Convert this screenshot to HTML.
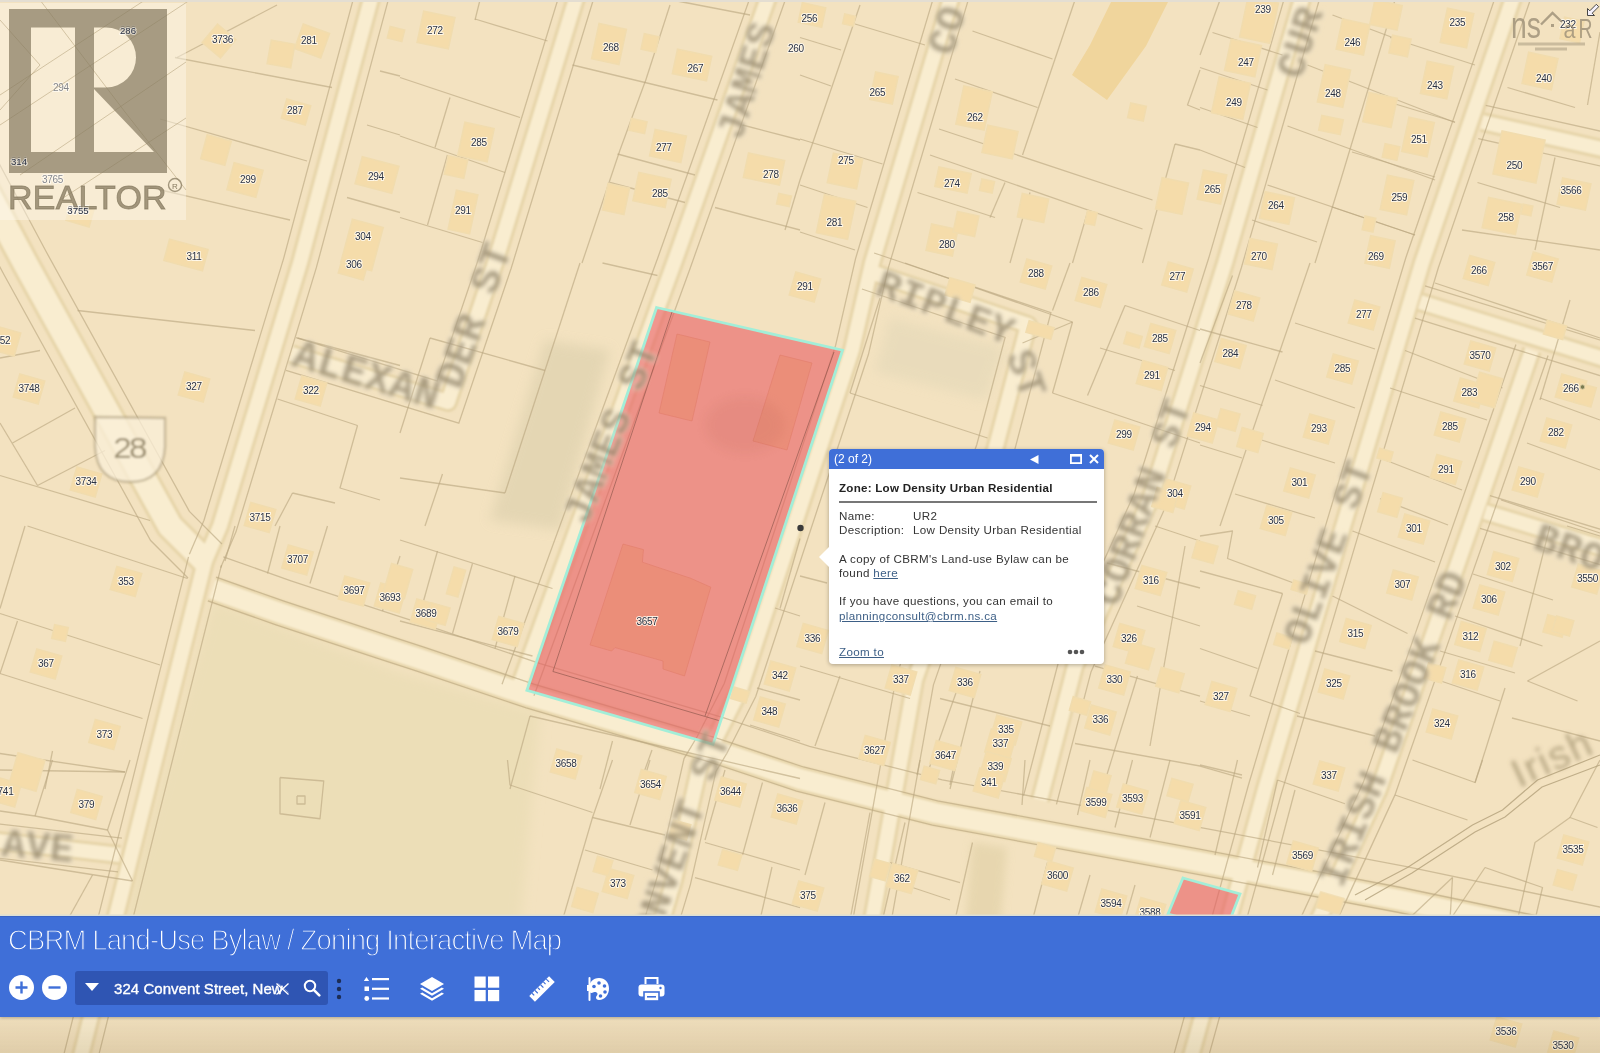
<!DOCTYPE html>
<html><head><meta charset="utf-8">
<style>
html,body{margin:0;padding:0;width:1600px;height:1053px;overflow:hidden;background:#f3e2c0;font-family:"Liberation Sans",sans-serif;}
#map{position:absolute;left:0;top:0;width:1600px;height:1053px;}
#toolbar{position:absolute;left:0;top:916px;width:1600px;height:101px;background:#3f6fd8;box-shadow:0 -1.5px 0 #dde0d6,inset 0 1px 0 #3a64c4,0 1px 3px rgba(0,0,0,.25);}
#toolbar .title{position:absolute;left:8px;top:7px;font-size:29.5px;color:#fff;letter-spacing:-0.9px;white-space:nowrap;font-weight:normal;-webkit-text-stroke:1.3px #3f6fd8;transform:scaleX(0.93);transform-origin:0 0;}
.zbtn{position:absolute;top:59px;width:25px;height:25px;}
#search{position:absolute;left:75px;top:55px;width:253px;height:34px;background:#2f55b3;border-radius:3px;}
#search .stext{position:absolute;left:39px;top:9px;font-size:15px;color:#fff;white-space:nowrap;-webkit-text-stroke:0.35px #fff;letter-spacing:0.05px;}
#search .sx{position:absolute;left:199px;top:9px;font-size:15px;color:#fff;}
.ic{position:absolute;top:60px;}
#popup{position:absolute;left:829px;top:449px;width:275px;height:215px;background:#fff;border-radius:4px;box-shadow:0 1px 4px rgba(0,0,0,.3);font-family:"Liberation Sans",sans-serif;}
#popup .ph{position:absolute;left:0;top:0;width:275px;height:20px;background:#3f6fd8;border-radius:4px 4px 0 0;}
#popup .pt{position:absolute;left:5px;top:3px;color:#fff;font-size:12px;}
#popup .pb{position:absolute;left:0;top:20px;width:275px;height:195px;}
#popup .zone{position:absolute;left:10px;top:12px;font-size:11.6px;letter-spacing:0.25px;font-weight:bold;color:#222;white-space:nowrap;}
#popup .hr{position:absolute;left:10px;top:32px;width:258px;height:2px;background:#777;}
#popup .row{position:absolute;left:10px;font-size:11.6px;letter-spacing:0.35px;color:#333;white-space:nowrap;line-height:14px;}
#popup .lab{display:inline-block;width:74px;}
#popup .lk{color:#3d5f86;}

</style></head><body>
<svg id="map" width="1600" height="1053" viewBox="0 0 1600 1053">
<defs>
<filter id="b05" x="-20%" y="-20%" width="140%" height="140%"><feGaussianBlur stdDeviation="0.6"/></filter>
<filter id="b1" x="-5%" y="-5%" width="110%" height="110%"><feGaussianBlur stdDeviation="1.2"/></filter>
<filter id="b15" x="-20%" y="-20%" width="140%" height="140%"><feGaussianBlur stdDeviation="1.3"/></filter>
<filter id="b2" x="-20%" y="-20%" width="140%" height="140%"><feGaussianBlur stdDeviation="2"/></filter>
<filter id="b4" x="-20%" y="-20%" width="140%" height="140%"><feGaussianBlur stdDeviation="4"/></filter>
<filter id="b6" x="-20%" y="-20%" width="140%" height="140%"><feGaussianBlur stdDeviation="6"/></filter>
</defs>
<rect x="0" y="0" width="1600" height="1053" fill="#f3e2c0"/>
<path d="M212,600 L400,672 L540,712 L520,930 L120,930 Z" fill="#ecdeb7" filter="url(#b6)"/>
<path d="M545,340 L610,350 L560,530 L490,520 Z" fill="#ddd0ad" opacity="0.65" filter="url(#b6)"/>
<path d="M890,318 L1005,348 L985,400 L875,372 Z" fill="#e3d8b8" opacity="0.6" filter="url(#b6)"/>
<path d="M972,842 L1007,848 L1000,930 L965,930 Z" fill="#e2d2a8" opacity="0.7" filter="url(#b4)"/>
<g filter="url(#b1)"><polyline points="372,-5 300,263 220,526 205,561" fill="none" stroke="#e6d4a8" stroke-width="20" stroke-linejoin="round"/><polyline points="-30,160 25,263 170,526 205,561" fill="none" stroke="#e6d4a8" stroke-width="30" stroke-linejoin="round"/><polyline points="205,561 155,760 80,1060" fill="none" stroke="#e6d4a8" stroke-width="20" stroke-linejoin="round"/><polyline points="212,589 280,613 380,646 420,659 530,696 713,750 800,779 935,813 1200,862 1400,900 1620,946" fill="none" stroke="#e6d4a8" stroke-width="26" stroke-linejoin="round"/><polyline points="577,-5 495,263 448,402 291,354" fill="none" stroke="#e6d4a8" stroke-width="20" stroke-linejoin="round"/><polyline points="769,-5 674,263 518,690" fill="none" stroke="#e6d4a8" stroke-width="20" stroke-linejoin="round"/><polyline points="952,-5 872,263 852,350 740,690 712,745 700,765 674,880 650,960" fill="none" stroke="#e6d4a8" stroke-width="20" stroke-linejoin="round"/><polyline points="868,271 1028,325 995,450 915,680 865,960" fill="none" stroke="#e6d4a8" stroke-width="20" stroke-linejoin="round"/><polyline points="1303,-5 1225,263 1150,500 1075,666 1040,800" fill="none" stroke="#e6d4a8" stroke-width="20" stroke-linejoin="round"/><polyline points="1514,-5 1422,263 1342,530 1265,789 1190,1060" fill="none" stroke="#e6d4a8" stroke-width="20" stroke-linejoin="round"/><polyline points="1482,122 1620,153" fill="none" stroke="#e6d4a8" stroke-width="20" stroke-linejoin="round"/><polyline points="1420,302 1620,364" fill="none" stroke="#e6d4a8" stroke-width="20" stroke-linejoin="round"/><polyline points="1532,350 1494,460 1445,600 1379,789 1300,960" fill="none" stroke="#e6d4a8" stroke-width="20" stroke-linejoin="round"/><polyline points="1485,512 1620,553" fill="none" stroke="#e6d4a8" stroke-width="20" stroke-linejoin="round"/><polyline points="-10,840 120,855" fill="none" stroke="#e6d4a8" stroke-width="20" stroke-linejoin="round"/><polyline points="372,-5 300,263 220,526 205,561" fill="none" stroke="#f9edd0" stroke-width="14" stroke-linejoin="round"/><polyline points="-30,160 25,263 170,526 205,561" fill="none" stroke="#f9edd0" stroke-width="24" stroke-linejoin="round"/><polyline points="205,561 155,760 80,1060" fill="none" stroke="#f9edd0" stroke-width="14" stroke-linejoin="round"/><polyline points="212,589 280,613 380,646 420,659 530,696 713,750 800,779 935,813 1200,862 1400,900 1620,946" fill="none" stroke="#f9edd0" stroke-width="20" stroke-linejoin="round"/><polyline points="577,-5 495,263 448,402 291,354" fill="none" stroke="#f9edd0" stroke-width="14" stroke-linejoin="round"/><polyline points="769,-5 674,263 518,690" fill="none" stroke="#f9edd0" stroke-width="14" stroke-linejoin="round"/><polyline points="952,-5 872,263 852,350 740,690 712,745 700,765 674,880 650,960" fill="none" stroke="#f9edd0" stroke-width="14" stroke-linejoin="round"/><polyline points="868,271 1028,325 995,450 915,680 865,960" fill="none" stroke="#f9edd0" stroke-width="14" stroke-linejoin="round"/><polyline points="1303,-5 1225,263 1150,500 1075,666 1040,800" fill="none" stroke="#f9edd0" stroke-width="14" stroke-linejoin="round"/><polyline points="1514,-5 1422,263 1342,530 1265,789 1190,1060" fill="none" stroke="#f9edd0" stroke-width="14" stroke-linejoin="round"/><polyline points="1482,122 1620,153" fill="none" stroke="#f9edd0" stroke-width="14" stroke-linejoin="round"/><polyline points="1420,302 1620,364" fill="none" stroke="#f9edd0" stroke-width="14" stroke-linejoin="round"/><polyline points="1532,350 1494,460 1445,600 1379,789 1300,960" fill="none" stroke="#f9edd0" stroke-width="14" stroke-linejoin="round"/><polyline points="1485,512 1620,553" fill="none" stroke="#f9edd0" stroke-width="14" stroke-linejoin="round"/><polyline points="-10,840 120,855" fill="none" stroke="#f9edd0" stroke-width="14" stroke-linejoin="round"/></g>
<g fill="none" stroke="#b9a680" stroke-width="1.3" stroke-opacity="0.62" filter="url(#b05)"><polyline points="388.4178314679533,-0.5892393071170172 316.3454220439997,267.6802846598215 235.99281610086464,531.839476697878 220.62546551030698,567.6966280758459"/><polyline points="355.5821685320467,-9.410760692882983 283.6545779560003,258.3197153401785 204.00718389913536,520.160523302122 189.37453448969302,554.3033719241541"/><polyline points="-8.829221830070217,148.69521554032875 46.09501656171117,251.55333471039208 189.37536123444758,511.4342357374933 221.97056274847714,544.0294372515228"/><polyline points="-51.17077816992978,171.30478445967125 3.9049834382888307,274.44666528960795 150.62463876555242,540.5657642625067 188.02943725152286,577.9705627484772"/><polyline points="221.487537336951,565.142597320842 171.48998567966603,764.1328529168361 96.49242250247065,1064.1231056256177"/><polyline points="188.512462663049,556.857402679158 138.51001432033397,755.8671470831639 63.507577497529354,1055.8768943743823"/><polyline points="223.31588400299466,556.9383286581817 290.9865180324265,580.8220818450401 390.5819338956886,613.6885690799165 430.67453960281307,626.718665934732 540.2346980641735,663.5707192353714 723.1902559709739,717.557605175083 809.5411253402864,746.3412282981872 942.2502252609864,779.7642608708079 1206.2642684373573,828.5819518732312 1406.6530947927045,866.6558288807472 1626.9586063882375,912.719708577995"/><polyline points="216.1602514716892,577.2126208302138 284.0391610413333,601.1698830312647 383.89041687341495,634.1207974558516 423.9244630892695,647.1318624760044 533.7627566412402,684.0774703071219 716.7464176363875,738.0726489614276 803.507766669223,766.9930986390394 937.6655239930097,800.7809782613265 1202.3030398666754,849.7139528945703 1402.445990732612,887.7411135590983 1622.5583111721462,933.7645987419099"/><polyline points="207.8397485283108,600.7873791697862 275.9608389586667,624.8301169687353 376.10958312658505,657.8792025441484 416.0755369107305,670.8681375239956 526.2372433587598,707.9225296928781 709.2535823636125,761.9273510385724 796.492233330777,791.0069013609606 932.3344760069903,825.2190217386735 1197.6969601333246,874.2860471054297 1397.554009267388,912.2588864409017 1617.4416888278538,958.2354012580901"/><polyline points="593.256092045568,-0.026121090535149882 511.18362765879255,268.21071373453594 458.81649511703125,423.0837227410216 286.02965421931884,370.25717265764456"/><polyline points="560.743907954432,-9.973878909464851 478.81637234120745,257.78928626546406 437.18350488296875,380.9162772589784 295.97034578068116,337.74282734235544"/><polyline points="785.0230943175657,0.6798282095848354 689.9957847023568,268.7568700714372 533.9677355052602,695.833645758362"/><polyline points="752.9769056824343,-10.679828209584835 658.0042152976432,257.2431299285628 502.0322644947399,684.166354241638"/><polyline points="968.2897232278215,-0.13739605139657574 888.4456905201988,267.3401135191394 868.3920381416209,354.57350136595306 755.7396879946074,696.55385002653 726.8815527756948,753.2394727779654 715.9802179965899,771.4083640764736 690.4519074099998,884.3220455171604 666.2830468487596,964.8849140546279"/><polyline points="935.7102767721785,-9.862603948603425 855.5543094798012,258.6598864808606 835.6079618583791,345.42649863404694 724.2603120053926,683.44614997347 697.1184472243052,736.7605272220346 684.0197820034101,758.5916359235264 657.5480925900002,875.6779544828396 633.7169531512404,955.1150859453721"/><polyline points="874.0757942390054,252.9976466992432 1050.9041733790095,312.6772246589946 1013.1847009501212,455.55401416235986 933.4396648702143,684.8209928920921 883.7041239346612,963.3400221311895"/><polyline points="861.9242057609946,289.0023533007568 1005.0958266209905,337.3227753410054 976.8152990498788,444.44598583764014 896.5603351297857,675.1790071079079 846.2958760653388,956.6599778688105"/><polyline points="1319.3227258937582,-0.24935589659278268 1241.2674646557382,267.94051604942456 1165.9051673726062,506.08537546412117 1091.0845786009422,671.6882786120709 1056.4481893566099,804.2961688618011"/><polyline points="1286.6772741062418,-9.750644103407218 1208.7325353442618,258.05948395057544 1134.0948326273938,493.91462453587883 1058.9154213990578,660.3117213879291 1023.5518106433902,795.7038311381989"/><polyline points="1530.0789763192156,0.5196485871933927 1438.1881850476282,268.2015188131219 1358.2899399153032,534.8619119422564 1281.341094650587,793.6898460144839 1206.3841278486093,1064.5343527256298"/><polyline points="1497.9210236807844,-10.519648587193393 1405.8118149523718,257.7984811868781 1325.7100600846968,525.1380880577436 1248.658905349413,784.3101539855161 1173.6158721513907,1055.4656472743702"/><polyline points="1485.7259870175815,105.41334811528216 1623.7259870175815,136.41334811528216"/><polyline points="1478.2740129824185,138.58665188471784 1616.2740129824185,169.58665188471784"/><polyline points="1425.0336791089394,285.7623254550343 1625.0336791089394,347.7623254550343"/><polyline points="1414.9663208910606,318.2376745449657 1614.9663208910606,380.2376745449657"/><polyline points="1548.0682334929566,355.5508442975668 1510.0569787859858,465.5834237124817 1461.0475778985754,605.6102833907979 1394.778053912866,795.3821020771474 1315.432667026275,967.1297116671096"/><polyline points="1515.9317665070434,344.4491557024332 1477.9430212140142,454.4165762875183 1428.9524221014246,594.3897166092021 1363.221946087134,782.6178979228526 1284.567332973725,952.8702883328904"/><polyline points="1489.9401573077037,495.73362837707367 1624.9401573077037,536.7336283770736"/><polyline points="1480.0598426922963,528.2663716229264 1615.0598426922963,569.2663716229264"/><polyline points="-8.051390164252782,823.1120480901908 121.94860983574722,838.1120480901908"/><polyline points="-11.948609835747218,856.8879519098092 118.05139016425278,871.8879519098092"/></g>
<g fill="none" stroke="#b9a680" stroke-width="1.3" stroke-opacity="0.62" stroke-linejoin="round" filter="url(#b05)"><polyline points="175,57.5 332,87.5"/><polyline points="160,119 307,161"/><polyline points="150,187.5 290,220"/><polyline points="347,197.5 400,212.5"/><polyline points="380,71 400,76"/><polyline points="367,125 400,135"/><polyline points="177,57.5 277,5"/><polyline points="475,19 547.5,41"/><polyline points="400,77.5 520,117.5"/><polyline points="400,136 505,172.5"/><polyline points="400,217.5 482.5,242.5"/><polyline points="450,97.5 435,147.5"/><polyline points="447.5,155 427.5,225"/><polyline points="480,0 475,20"/><polyline points="572.5,65 717.5,100"/><polyline points="645,82.5 670,5"/><polyline points="617.5,154 695,175"/><polyline points="610,182.5 685,202.5"/><polyline points="672,0 750,15"/><polyline points="742.5,125 800,140"/><polyline points="715,207.5 800,230"/><polyline points="800,180 785,230"/><polyline points="645,82 620,150 582,263"/><polyline points="855,24 925,45"/><polyline points="800,37.5 841,50"/><polyline points="800,75 831,86"/><polyline points="860,5 800,180"/><polyline points="800,139 882.5,164"/><polyline points="800,185 867.5,207.5"/><polyline points="800,232 855,250"/><polyline points="972.5,31 1052.5,59"/><polyline points="955,79 1037.5,107.5"/><polyline points="939,129 1152.5,200"/><polyline points="930,155 1142.5,229"/><polyline points="917.5,192.5 995,217.5"/><polyline points="1075,0 1022.5,155"/><polyline points="1005,182.5 990,217.5"/><polyline points="1175,144 1200,150"/><polyline points="1175,144 1142.5,263"/><polyline points="1030,192.5 1010,263"/><polyline points="1087.5,212.5 1072.5,263"/><polyline points="1200,70 1187.5,105 1200,110"/><polyline points="1212.5,32.5 1282.5,55"/><polyline points="1200,67.5 1267.5,90"/><polyline points="1200,107.5 1257.5,127.5"/><polyline points="1200,150 1245,167.5"/><polyline points="1220,0 1200,55"/><polyline points="1332.5,15 1392.5,37.5"/><polyline points="1307.5,65 1455,122.5"/><polyline points="1287.5,126 1435,180"/><polyline points="1267.5,185 1415,235"/><polyline points="1252,220 1317,242"/><polyline points="1395,0 1340,182.5 1315,263"/><polyline points="1390,37.5 1475,65"/><polyline points="1372,97 1455,122"/><polyline points="1352,152 1435,177"/><polyline points="1332,207 1415,235"/><polyline points="1507.5,87.5 1575,107.5"/><polyline points="1587.5,105 1600,32"/><polyline points="1477.5,182.5 1560,207.5"/><polyline points="1555,157.5 1535,250"/><polyline points="1462,230 1600,250"/><polyline points="77.5,310.5 255,330.5"/><polyline points="0,358 40,350.5"/><polyline points="12.5,443 75,408"/><polyline points="37.5,485.5 105,450.5"/><polyline points="0,475.5 150,520.5"/><polyline points="0,423 37.5,485.5"/><polyline points="277.5,399 357.5,425.5"/><polyline points="297.5,338 400,365.5"/><polyline points="357.5,425.5 340,488 380,500"/><polyline points="292.5,493 275,526"/><polyline points="292.5,493 335,503"/><polyline points="580,263 505,493"/><polyline points="602.5,263 657.5,275.5"/><polyline points="430,338 545,370.5"/><polyline points="430,338 400,433"/><polyline points="400,478 505,493"/><polyline points="442.5,474 425,526"/><polyline points="905,263 1072.5,322"/><polyline points="1022.5,343 1072.5,322"/><polyline points="1072.5,322 1052.5,393"/><polyline points="1052.5,393 1200,443"/><polyline points="850,393 987.5,438"/><polyline points="880,298 850,393"/><polyline points="1125,305.5 1200,330.5"/><polyline points="1070,263 1052.5,310.5"/><polyline points="1125,305.5 1087.5,395.5"/><polyline points="1100,348 1175,370.5"/><polyline points="1200,329 1282.5,352"/><polyline points="1295,323 1375,349"/><polyline points="1200,385.5 1262.5,405.5"/><polyline points="1275,380 1355,408"/><polyline points="1200,445 1242,458"/><polyline points="1255,438 1335,463"/><polyline points="1235,494 1315,518"/><polyline points="1310,263 1220,526"/><polyline points="1232.5,275.5 1200,363"/><polyline points="1435,283 1600,338"/><polyline points="1405,350.5 1502.5,388"/><polyline points="1390,388 1487,420"/><polyline points="1380,458 1462,490"/><polyline points="1540,398 1600,420"/><polyline points="1527,443 1600,470"/><polyline points="1570,300 1540,400"/><polyline points="25,526 0,608.5"/><polyline points="27.5,526 187.5,578.5"/><polyline points="0,613.5 160,665"/><polyline points="17.5,621 0,673.5"/><polyline points="0,673.5 142.5,718.5"/><polyline points="0,753.5 125,772"/><polyline points="52.5,751 45,789"/><polyline points="235,526 225,561"/><polyline points="280,526 267.5,573.5"/><polyline points="327.5,526 310,583.5"/><polyline points="400,556 382.5,611"/><polyline points="400,540 552.5,588.5"/><polyline points="437.5,551 420,613.5"/><polyline points="472.5,563.5 452.5,633.5"/><polyline points="515,576 495,648.5"/><polyline points="400,621 532.5,656"/><polyline points="530,716 510,789"/><polyline points="530,716 800,778.5"/><polyline points="612.5,741 600,789"/><polyline points="652,750 638,789"/><polyline points="800,538.5 780,608.5"/><polyline points="757,688 800,700"/><polyline points="750,725 800,741"/><polyline points="775,608 800,616"/><polyline points="800,576 827,583"/><polyline points="800,666 910,698.5"/><polyline points="840,676 815,746"/><polyline points="940,698.5 1050,726"/><polyline points="980,671 950,789"/><polyline points="962,676 925,780"/><polyline points="1155,526 1200,541"/><polyline points="1107,563 1200,588"/><polyline points="1075,743.5 1200,766"/><polyline points="1095,666 1200,696"/><polyline points="1137,606 1200,626"/><polyline points="1137.5,676 1102.5,789"/><polyline points="1185,546 1150,746"/><polyline points="1200,536 1232.5,531 1227.5,558.5 1295,583.5"/><polyline points="1200,571 1282.5,593.5"/><polyline points="1282.5,593.5 1250,696 1300,713.5"/><polyline points="1200,648.5 1257.5,668.5"/><polyline points="1200,701 1250,716"/><polyline points="1200,766 1242,778"/><polyline points="1352.5,531 1435,562"/><polyline points="1332.5,596 1407.5,633.5"/><polyline points="1315,651 1392.5,671"/><polyline points="1297,716 1375,736"/><polyline points="1455,616 1542.5,646"/><polyline points="1380,498.6 1448,525"/><polyline points="1501,500 1600,533"/><polyline points="1473,574 1553,600"/><polyline points="1440,651 1515,673"/><polyline points="1432,678 1500,701"/><polyline points="1550,526 1520,646"/><polyline points="1567,526 1600,536"/><polyline points="1527.5,681 1600,641"/><polyline points="1527.5,681 1577.5,701"/><polyline points="1505,688 1475,783"/><polyline points="1512,718 1600,741"/><polyline points="0,770 125,772"/><polyline points="52.5,760 35,816"/><polyline points="35,816 107.5,830"/><polyline points="0,811 35,816"/><polyline points="130,760 107.5,830 132.5,881"/><polyline points="0,860 132.5,881"/><polyline points="92.5,875 67.5,920"/><polyline points="280,777.5 323.75,781 320,818.75 280,813.75 280,777.5"/><polyline points="297,796 305,796 305,804 297,804 297,796"/><polyline points="507.5,760 510,785 592.5,812.5"/><polyline points="612.5,760 592.5,817.5 562.5,920"/><polyline points="592.5,817.5 665,835"/><polyline points="585,850 652.5,870"/><polyline points="650,760 630,825"/><polyline points="725,770 705,840"/><polyline points="762.5,782.5 742.5,855"/><polyline points="705,842.5 800,870"/><polyline points="695,877.5 800,907.5"/><polyline points="772,867 760,920"/><polyline points="825,802.5 805,875"/><polyline points="870,812.5 850,920"/><polyline points="905,822.5 882.5,920"/><polyline points="972.5,842.5 955,920"/><polyline points="890,862.5 960,882.5"/><polyline points="890,880 950,900"/><polyline points="1047.5,862.5 1032.5,920"/><polyline points="1090,875 1077,920"/><polyline points="1135,885 1125,920"/><polyline points="920,760 917,775"/><polyline points="955,760 950,785"/><polyline points="1025,760 1022,805"/><polyline points="1077.5,815 1090,760"/><polyline points="1115,827.5 1132.5,760"/><polyline points="1150,837.5 1170,760"/><polyline points="1200,765 1242,775"/><polyline points="1237.5,760 1215,855"/><polyline points="1277.5,780 1257.5,867.5"/><polyline points="1295,790 1272.5,875"/><polyline points="1277.5,780 1345,803.75"/><polyline points="1395,795 1467.5,820"/><polyline points="1475,782.5 1482.5,760"/><polyline points="1412.5,760 1475,782.5"/><polyline points="1600,760 1570,817.5 1597.5,827.5"/><polyline points="1570,817.5 1535,842.5 1517.5,920"/><polyline points="1485,867.5 1542.5,887.5 1535,920"/><polyline points="1485,867.5 1450,920"/><polyline points="1452.5,877.5 1407.5,920"/><polyline points="1452.5,877.5 1450,920"/></g>
<g fill="none" stroke="#b3a07a" stroke-width="1.2" stroke-opacity="0.8" filter="url(#b05)"><polyline points="1355,895 1407.5,867.5 1472.5,825 1502.5,810 1537.5,780 1600,755"/><polyline points="1365,900 1412,873 1475,832 1505,817 1542,787 1600,765"/></g>
<g fill="#f5dcaa" stroke="#f1dcae" stroke-width="1.5" filter="url(#b05)"><rect x="-8.0" y="329.0" width="26" height="24" transform="rotate(16 5.0 341.0)"/><rect x="16.0" y="377.0" width="26" height="24" transform="rotate(16 29.0 389.0)"/><rect x="181.0" y="375.0" width="26" height="24" transform="rotate(16 194.0 387.0)"/><rect x="298.0" y="379.0" width="26" height="24" transform="rotate(16 311.0 391.0)"/><rect x="73.0" y="470.0" width="26" height="24" transform="rotate(16 86.0 482.0)"/><rect x="247.0" y="505.5" width="26" height="24" transform="rotate(16 260.0 517.5)"/><rect x="341.0" y="253.0" width="26" height="24" transform="rotate(16 354.0 265.0)"/><rect x="792.0" y="275.0" width="26" height="24" transform="rotate(16 805.0 287.0)"/><rect x="1023.0" y="262.0" width="26" height="24" transform="rotate(16 1036.0 274.0)"/><rect x="1078.0" y="280.5" width="26" height="24" transform="rotate(16 1091.0 292.5)"/><rect x="1164.5" y="265.0" width="26" height="24" transform="rotate(16 1177.5 277.0)"/><rect x="1147.0" y="326.5" width="26" height="24" transform="rotate(16 1160.0 338.5)"/><rect x="1139.0" y="363.5" width="26" height="24" transform="rotate(16 1152.0 375.5)"/><rect x="1111.0" y="423.0" width="26" height="24" transform="rotate(16 1124.0 435.0)"/><rect x="1162.0" y="482.0" width="26" height="24" transform="rotate(16 1175.0 494.0)"/><rect x="1466.0" y="258.5" width="26" height="24" transform="rotate(16 1479.0 270.5)"/><rect x="1529.5" y="255.0" width="26" height="24" transform="rotate(16 1542.5 267.0)"/><rect x="1231.0" y="294.0" width="26" height="24" transform="rotate(16 1244.0 306.0)"/><rect x="1351.0" y="303.0" width="26" height="24" transform="rotate(16 1364.0 315.0)"/><rect x="1217.5" y="341.5" width="26" height="24" transform="rotate(16 1230.5 353.5)"/><rect x="1329.5" y="357.0" width="26" height="24" transform="rotate(16 1342.5 369.0)"/><rect x="1467.0" y="344.0" width="26" height="24" transform="rotate(16 1480.0 356.0)"/><rect x="1456.5" y="381.0" width="26" height="24" transform="rotate(16 1469.5 393.0)"/><rect x="1558.0" y="377.0" width="26" height="24" transform="rotate(16 1571.0 389.0)"/><rect x="1190.0" y="416.0" width="26" height="24" transform="rotate(16 1203.0 428.0)"/><rect x="1306.0" y="417.0" width="26" height="24" transform="rotate(16 1319.0 429.0)"/><rect x="1437.0" y="415.0" width="26" height="24" transform="rotate(16 1450.0 427.0)"/><rect x="1543.0" y="421.0" width="26" height="24" transform="rotate(16 1556.0 433.0)"/><rect x="1286.5" y="471.0" width="26" height="24" transform="rotate(16 1299.5 483.0)"/><rect x="1433.0" y="457.5" width="26" height="24" transform="rotate(16 1446.0 469.5)"/><rect x="1515.0" y="470.0" width="26" height="24" transform="rotate(16 1528.0 482.0)"/><rect x="1263.0" y="508.5" width="26" height="24" transform="rotate(16 1276.0 520.5)"/><rect x="284.5" y="548.0" width="26" height="24" transform="rotate(16 297.5 560.0)"/><rect x="113.0" y="569.5" width="26" height="24" transform="rotate(16 126.0 581.5)"/><rect x="341.0" y="579.0" width="26" height="24" transform="rotate(16 354.0 591.0)"/><rect x="377.0" y="586.0" width="26" height="24" transform="rotate(16 390.0 598.0)"/><rect x="33.0" y="652.0" width="26" height="24" transform="rotate(16 46.0 664.0)"/><rect x="91.5" y="722.5" width="26" height="24" transform="rotate(16 104.5 734.5)"/><rect x="413.0" y="602.0" width="26" height="24" transform="rotate(16 426.0 614.0)"/><rect x="495.0" y="619.5" width="26" height="24" transform="rotate(16 508.0 631.5)"/><rect x="767.0" y="664.0" width="26" height="24" transform="rotate(16 780.0 676.0)"/><rect x="756.5" y="700.0" width="26" height="24" transform="rotate(16 769.5 712.0)"/><rect x="553.0" y="752.0" width="26" height="24" transform="rotate(16 566.0 764.0)"/><rect x="637.5" y="772.5" width="26" height="24" transform="rotate(16 650.5 784.5)"/><rect x="799.5" y="626.5" width="26" height="24" transform="rotate(16 812.5 638.5)"/><rect x="1138.0" y="568.5" width="26" height="24" transform="rotate(16 1151.0 580.5)"/><rect x="1116.0" y="626.5" width="26" height="24" transform="rotate(16 1129.0 638.5)"/><rect x="888.0" y="668.0" width="26" height="24" transform="rotate(16 901.0 680.0)"/><rect x="952.0" y="670.5" width="26" height="24" transform="rotate(16 965.0 682.5)"/><rect x="1101.5" y="668.0" width="26" height="24" transform="rotate(16 1114.5 680.0)"/><rect x="1087.5" y="708.0" width="26" height="24" transform="rotate(16 1100.5 720.0)"/><rect x="993.0" y="718.0" width="26" height="24" transform="rotate(16 1006.0 730.0)"/><rect x="987.5" y="732.0" width="26" height="24" transform="rotate(16 1000.5 744.0)"/><rect x="861.5" y="738.5" width="26" height="24" transform="rotate(16 874.5 750.5)"/><rect x="932.5" y="743.5" width="26" height="24" transform="rotate(16 945.5 755.5)"/><rect x="982.5" y="754.5" width="26" height="24" transform="rotate(16 995.5 766.5)"/><rect x="976.0" y="771.0" width="26" height="24" transform="rotate(16 989.0 783.0)"/><rect x="1401.0" y="517.0" width="26" height="24" transform="rotate(16 1414.0 529.0)"/><rect x="1490.0" y="554.5" width="26" height="24" transform="rotate(16 1503.0 566.5)"/><rect x="1574.5" y="567.0" width="26" height="24" transform="rotate(16 1587.5 579.0)"/><rect x="1389.5" y="573.0" width="26" height="24" transform="rotate(16 1402.5 585.0)"/><rect x="1476.0" y="588.0" width="26" height="24" transform="rotate(16 1489.0 600.0)"/><rect x="1342.5" y="621.5" width="26" height="24" transform="rotate(16 1355.5 633.5)"/><rect x="1457.5" y="624.5" width="26" height="24" transform="rotate(16 1470.5 636.5)"/><rect x="1455.0" y="663.0" width="26" height="24" transform="rotate(16 1468.0 675.0)"/><rect x="1208.0" y="684.5" width="26" height="24" transform="rotate(16 1221.0 696.5)"/><rect x="1321.0" y="672.0" width="26" height="24" transform="rotate(16 1334.0 684.0)"/><rect x="1429.0" y="712.0" width="26" height="24" transform="rotate(16 1442.0 724.0)"/><rect x="1316.0" y="764.0" width="26" height="24" transform="rotate(16 1329.0 776.0)"/><rect x="-7.5" y="780.0" width="26" height="24" transform="rotate(16 5.5 792.0)"/><rect x="73.5" y="792.5" width="26" height="24" transform="rotate(16 86.5 804.5)"/><rect x="717.5" y="780.0" width="26" height="24" transform="rotate(16 730.5 792.0)"/><rect x="774.0" y="797.0" width="26" height="24" transform="rotate(16 787.0 809.0)"/><rect x="605.0" y="871.5" width="26" height="24" transform="rotate(16 618.0 883.5)"/><rect x="1083.0" y="790.5" width="26" height="24" transform="rotate(16 1096.0 802.5)"/><rect x="1119.5" y="787.0" width="26" height="24" transform="rotate(16 1132.5 799.0)"/><rect x="1177.0" y="803.5" width="26" height="24" transform="rotate(16 1190.0 815.5)"/><rect x="889.0" y="866.5" width="26" height="24" transform="rotate(16 902.0 878.5)"/><rect x="795.0" y="884.0" width="26" height="24" transform="rotate(16 808.0 896.0)"/><rect x="1044.5" y="864.0" width="26" height="24" transform="rotate(16 1057.5 876.0)"/><rect x="1098.0" y="892.0" width="26" height="24" transform="rotate(16 1111.0 904.0)"/><rect x="1137.0" y="900.5" width="26" height="24" transform="rotate(16 1150.0 912.5)"/><rect x="1289.5" y="844.0" width="26" height="24" transform="rotate(16 1302.5 856.0)"/><rect x="1560.0" y="838.0" width="26" height="24" transform="rotate(16 1573.0 850.0)"/><rect x="1493.0" y="1020.0" width="26" height="24" transform="rotate(16 1506.0 1032.0)"/><rect x="1550.0" y="1034.0" width="26" height="24" transform="rotate(16 1563.0 1046.0)"/><rect x="207.0" y="29.0" width="24" height="24" transform="rotate(40 219 41)"/><rect x="298.0" y="28.0" width="28" height="26" transform="rotate(20 312 41)"/><rect x="269.0" y="42.0" width="24" height="24" transform="rotate(10 281 54)"/><rect x="283.5" y="102.0" width="25" height="20" transform="rotate(16 296 112)"/><rect x="203.5" y="137.5" width="25" height="25" transform="rotate(15 216 150)"/><rect x="230.0" y="166.0" width="30" height="28" transform="rotate(15 245 180)"/><rect x="358.0" y="161.0" width="38" height="28" transform="rotate(15 377 175)"/><rect x="346.0" y="222.5" width="32" height="45" transform="rotate(15 362 245)"/><rect x="166.0" y="244.0" width="40" height="22" transform="rotate(15 186 255)"/><rect x="68.0" y="206.0" width="24" height="18" transform="rotate(16 80 215)"/><rect x="420.0" y="14.0" width="32" height="32" transform="rotate(12 436 30)"/><rect x="388.5" y="28.0" width="15" height="12" transform="rotate(14 396 34)"/><rect x="595.0" y="26.0" width="28" height="36" transform="rotate(12 609 44)"/><rect x="642.5" y="35.0" width="15" height="16" transform="rotate(12 650 43)"/><rect x="674.5" y="52.5" width="35" height="25" transform="rotate(12 692 65)"/><rect x="461.0" y="125.0" width="30" height="34" transform="rotate(12 476 142)"/><rect x="446.0" y="157.5" width="20" height="19" transform="rotate(12 456 167)"/><rect x="452.0" y="192.0" width="22" height="40" transform="rotate(12 463 212)"/><rect x="630.0" y="120.0" width="16" height="12" transform="rotate(12 638 126)"/><rect x="652.0" y="132.5" width="32" height="27" transform="rotate(12 668 146)"/><rect x="635.5" y="175.5" width="33" height="29" transform="rotate(12 652 190)"/><rect x="605.0" y="185.5" width="22" height="27" transform="rotate(12 616 199)"/><rect x="745.5" y="156.5" width="37" height="25" transform="rotate(12 764 169)"/><rect x="777.5" y="194.5" width="13" height="11" transform="rotate(12 784 200)"/><rect x="800.0" y="5.0" width="24" height="20" transform="rotate(12 812 15)"/><rect x="843.5" y="15.0" width="11" height="10" transform="rotate(12 849 20)"/><rect x="872.5" y="74.0" width="23" height="28" transform="rotate(12 884 88)"/><rect x="959.5" y="88.5" width="29" height="39" transform="rotate(12 974 108)"/><rect x="984.5" y="128.0" width="31" height="28" transform="rotate(12 1000 142)"/><rect x="830.0" y="156.0" width="30" height="30" transform="rotate(12 845 171)"/><rect x="936.5" y="170.0" width="33" height="20" transform="rotate(12 953 180)"/><rect x="980.5" y="180.0" width="13" height="12" transform="rotate(12 987 186)"/><rect x="820.0" y="197.5" width="32" height="39" transform="rotate(12 836 217)"/><rect x="928.5" y="226.5" width="27" height="27" transform="rotate(12 942 240)"/><rect x="955.0" y="213.5" width="22" height="21" transform="rotate(12 966 224)"/><rect x="1019.5" y="196.0" width="27" height="24" transform="rotate(12 1033 208)"/><rect x="1086.0" y="211.5" width="10" height="13" transform="rotate(12 1091 218)"/><rect x="1129.0" y="104.5" width="16" height="15" transform="rotate(12 1137 112)"/><rect x="1158.5" y="180.0" width="27" height="32" transform="rotate(12 1172 196)"/><rect x="1243.5" y="-0.5" width="31" height="41" transform="rotate(12 1259 20)"/><rect x="1227.5" y="42.0" width="31" height="32" transform="rotate(12 1243 58)"/><rect x="1215.0" y="79.5" width="32" height="37" transform="rotate(12 1231 98)"/><rect x="1339.0" y="21.5" width="28" height="31" transform="rotate(12 1353 37)"/><rect x="1372.0" y="2.5" width="28" height="25" transform="rotate(12 1386 15)"/><rect x="1390.5" y="37.0" width="19" height="18" transform="rotate(12 1400 46)"/><rect x="1321.0" y="67.0" width="26" height="38" transform="rotate(12 1334 86)"/><rect x="1320.0" y="117.5" width="22" height="15" transform="rotate(12 1331 125)"/><rect x="1365.5" y="95.0" width="29" height="30" transform="rotate(12 1380 110)"/><rect x="1443.5" y="10.5" width="27" height="35" transform="rotate(12 1457 28)"/><rect x="1423.5" y="63.5" width="27" height="33" transform="rotate(12 1437 80)"/><rect x="1405.0" y="119.5" width="26" height="35" transform="rotate(12 1418 137)"/><rect x="1383.5" y="145.0" width="15" height="14" transform="rotate(12 1391 152)"/><rect x="1383.5" y="177.5" width="27" height="35" transform="rotate(12 1397 195)"/><rect x="1262.0" y="194.5" width="30" height="27" transform="rotate(12 1277 208)"/><rect x="1200.0" y="172.0" width="24" height="30" transform="rotate(12 1212 187)"/><rect x="1363.5" y="217.0" width="11" height="14" transform="rotate(12 1369 224)"/><rect x="1247.0" y="241.0" width="28" height="26" transform="rotate(12 1261 254)"/><rect x="1367.5" y="238.0" width="25" height="28" transform="rotate(12 1380 252)"/><rect x="1525.0" y="55.0" width="30" height="32" transform="rotate(12 1540 71)"/><rect x="1497.0" y="135.0" width="44" height="44" transform="rotate(12 1519 157)"/><rect x="1559.5" y="180.5" width="29" height="27" transform="rotate(12 1574 194)"/><rect x="1485.0" y="200.5" width="34" height="31" transform="rotate(12 1502 216)"/><rect x="1522.0" y="205.0" width="10" height="10" transform="rotate(12 1527 210)"/><rect x="1562.0" y="19.0" width="20" height="22" transform="rotate(12 1572 30)"/><rect x="947.0" y="281.0" width="26" height="18" transform="rotate(16 960 290)"/><rect x="1027.0" y="324.0" width="26" height="12" transform="rotate(16 1040 330)"/><rect x="1125.0" y="334.0" width="16" height="12" transform="rotate(16 1133 340)"/><rect x="1475.0" y="375.0" width="24" height="30" transform="rotate(16 1487 390)"/><rect x="1576.0" y="385.0" width="18" height="20" transform="rotate(16 1585 395)"/><rect x="1380.0" y="495.0" width="20" height="20" transform="rotate(16 1390 505)"/><rect x="1545.0" y="323.0" width="20" height="14" transform="rotate(16 1555 330)"/><rect x="1218.0" y="411.0" width="20" height="18" transform="rotate(16 1228 420)"/><rect x="1378.0" y="450.0" width="14" height="10" transform="rotate(16 1385 455)"/><rect x="1239.0" y="430.0" width="22" height="20" transform="rotate(16 1250 440)"/><rect x="1154.0" y="490.0" width="22" height="20" transform="rotate(16 1165 500)"/><rect x="1007.0" y="613.0" width="20" height="14" transform="rotate(16 1017 620)"/><rect x="1049.0" y="601.0" width="22" height="18" transform="rotate(16 1060 610)"/><rect x="1071.0" y="699.0" width="18" height="14" transform="rotate(16 1080 706)"/><rect x="1128.0" y="645.0" width="24" height="22" transform="rotate(16 1140 656)"/><rect x="1158.0" y="670.0" width="24" height="20" transform="rotate(16 1170 680)"/><rect x="1292.0" y="582.0" width="16" height="10" transform="rotate(16 1300 587)"/><rect x="1275.0" y="635.0" width="16" height="12" transform="rotate(16 1283 641)"/><rect x="1194.0" y="543.0" width="22" height="18" transform="rotate(16 1205 552)"/><rect x="1236.0" y="593.0" width="18" height="14" transform="rotate(16 1245 600)"/><rect x="1545.0" y="617.0" width="20" height="18" transform="rotate(16 1555 626)"/><rect x="1426.0" y="665.0" width="18" height="16" transform="rotate(16 1435 673)"/><rect x="1491.0" y="644.0" width="24" height="20" transform="rotate(16 1503 654)"/><rect x="1554.0" y="618.0" width="18" height="16" transform="rotate(16 1563 626)"/><rect x="53.0" y="626.0" width="14" height="14" transform="rotate(12 60 633)"/><rect x="13.0" y="756.0" width="28" height="32" transform="rotate(16 27 772)"/><rect x="450.0" y="568.0" width="12" height="28" transform="rotate(16 456 582)"/><rect x="387.0" y="566.0" width="22" height="30" transform="rotate(16 398 581)"/><rect x="428.0" y="605.0" width="20" height="18" transform="rotate(16 438 614)"/><rect x="1318.0" y="895.0" width="24" height="16" transform="rotate(16 1330 903)"/><rect x="1555.0" y="872.0" width="20" height="16" transform="rotate(16 1565 880)"/><rect x="1036.0" y="845.0" width="18" height="14" transform="rotate(16 1045 852)"/><rect x="732.0" y="689.0" width="16" height="12" transform="rotate(16 740 695)"/><rect x="922.0" y="768.0" width="16" height="14" transform="rotate(16 930 775)"/><rect x="1091.0" y="773.0" width="18" height="18" transform="rotate(16 1100 782)"/><rect x="1169.0" y="781.0" width="22" height="18" transform="rotate(16 1180 790)"/><rect x="872.0" y="861.0" width="16" height="18" transform="rotate(16 880 870)"/><rect x="671.0" y="822.0" width="18" height="16" transform="rotate(16 680 830)"/><rect x="720.0" y="852.0" width="20" height="16" transform="rotate(16 730 860)"/><rect x="595.0" y="858.0" width="16" height="16" transform="rotate(16 603 866)"/><rect x="574.0" y="890.0" width="22" height="20" transform="rotate(16 585 900)"/></g>
<polygon points="1112,0 1169,0 1146,46 1107,100 1072,75 1090,45" fill="#f0d59c" filter="url(#b05)"/>
<g>
<polygon points="656.6,307.5 842.5,350.2 713,744.4 526.9,690.4" fill="#e8585e" fill-opacity="0.58"/>
<polygon points="656.6,307.5 842.5,350.2 713,744.4 526.9,690.4" fill="none" stroke="#a2eed8" stroke-width="2.8" stroke-linejoin="miter" filter="url(#b05)"/>
</g>
<g fill="#ea8a70" fill-opacity="0.55" stroke="#e07a66" stroke-opacity="0.5" stroke-width="1"><polygon points="623,544 643.5,549.6 642.4,562.2 690.2,578.1 710.8,587.2 684.5,676 663,669 663,661 615,647.6 611.6,651 590,644.9"/><polygon points="677,334 710,342 692,421 659,413"/><polygon points="780,355 812,363 787,450 753,441"/></g>
<g fill="none" stroke="#7a4a40" stroke-opacity="0.55" stroke-width="1"><polyline points="672,312 552.9,671.5 718.7,720.5"/><polyline points="834,352 705,716"/></g>
<ellipse cx="745" cy="425" rx="40" ry="28" fill="#b06050" opacity="0.12" filter="url(#b6)"/>
<polygon points="1183,878 1240,894 1226,930 1168,914" fill="#e8585e" fill-opacity="0.58" stroke="#a2eed8" stroke-width="2.8"/>
<g font-family="Liberation Sans" font-size="10" text-anchor="middle" fill="#2b3243" stroke="#fffaf0" stroke-width="2" stroke-opacity="0.85" paint-order="stroke" letter-spacing="-0.3"><text x="128" y="33.9">286</text><text x="61" y="90.9">294</text><text x="19" y="165.4">314</text><text x="52.5" y="182.9">3765</text><text x="78" y="213.9">3755</text><text x="222.5" y="42.9">3736</text><text x="309" y="43.9">281</text><text x="295" y="114.4">287</text><text x="248" y="183.4">299</text><text x="376" y="180.4">294</text><text x="363" y="240.4">304</text><text x="194" y="260.4">311</text><text x="435" y="34.4">272</text><text x="611" y="50.9">268</text><text x="695.5" y="72.4">267</text><text x="479" y="146.4">285</text><text x="664" y="150.9">277</text><text x="660" y="197.4">285</text><text x="771" y="177.9">278</text><text x="463" y="213.9">291</text><text x="796" y="52.4">260</text><text x="809.5" y="22.4">256</text><text x="877.5" y="96.4">265</text><text x="975" y="121.4">262</text><text x="846" y="164.4">275</text><text x="952" y="187.4">274</text><text x="834.5" y="226.4">281</text><text x="947" y="248.4">280</text><text x="1263" y="13.4">239</text><text x="1457.5" y="26.4">235</text><text x="1568" y="28.4">232</text><text x="1352.5" y="45.9">246</text><text x="1246" y="65.9">247</text><text x="1333" y="96.9">248</text><text x="1435" y="89.4">243</text><text x="1544" y="82.4">240</text><text x="1234" y="106.4">249</text><text x="1419" y="143.4">251</text><text x="1514.5" y="168.9">250</text><text x="1571" y="194.4">3566</text><text x="1212.5" y="193.4">265</text><text x="1399.5" y="201.4">259</text><text x="1276" y="209.4">264</text><text x="1506" y="220.9">258</text><text x="1259" y="260.4">270</text><text x="1376" y="260.4">269</text><text x="5" y="344.4">52</text><text x="29" y="392.4">3748</text><text x="194" y="390.4">327</text><text x="311" y="394.4">322</text><text x="86" y="485.4">3734</text><text x="260" y="520.9">3715</text><text x="354" y="268.4">306</text><text x="805" y="290.4">291</text><text x="1036" y="277.4">288</text><text x="1091" y="295.9">286</text><text x="1177.5" y="280.4">277</text><text x="1160" y="341.9">285</text><text x="1152" y="378.9">291</text><text x="1124" y="438.4">299</text><text x="1175" y="497.4">304</text><text x="1479" y="273.9">266</text><text x="1542.5" y="270.4">3567</text><text x="1244" y="309.4">278</text><text x="1364" y="318.4">277</text><text x="1230.5" y="356.9">284</text><text x="1342.5" y="372.4">285</text><text x="1480" y="359.4">3570</text><text x="1469.5" y="396.4">283</text><text x="1571" y="392.4">266</text><text x="1203" y="431.4">294</text><text x="1319" y="432.4">293</text><text x="1450" y="430.4">285</text><text x="1556" y="436.4">282</text><text x="1299.5" y="486.4">301</text><text x="1446" y="472.9">291</text><text x="1528" y="485.4">290</text><text x="1276" y="523.9">305</text><text x="297.5" y="563.4">3707</text><text x="126" y="584.9">353</text><text x="354" y="594.4">3697</text><text x="390" y="601.4">3693</text><text x="46" y="667.4">367</text><text x="104.5" y="737.9">373</text><text x="426" y="617.4">3689</text><text x="508" y="634.9">3679</text><text x="647" y="625.4">3657</text><text x="780" y="679.4">342</text><text x="769.5" y="715.4">348</text><text x="566" y="767.4">3658</text><text x="650.5" y="787.9">3654</text><text x="812.5" y="641.9">336</text><text x="1151" y="583.9">316</text><text x="1129" y="641.9">326</text><text x="901" y="683.4">337</text><text x="965" y="685.9">336</text><text x="1114.5" y="683.4">330</text><text x="1100.5" y="723.4">336</text><text x="1006" y="733.4">335</text><text x="1000.5" y="747.4">337</text><text x="874.5" y="753.9">3627</text><text x="945.5" y="758.9">3647</text><text x="995.5" y="769.9">339</text><text x="989" y="786.4">341</text><text x="1414" y="532.4">301</text><text x="1503" y="569.9">302</text><text x="1587.5" y="582.4">3550</text><text x="1402.5" y="588.4">307</text><text x="1489" y="603.4">306</text><text x="1355.5" y="636.9">315</text><text x="1470.5" y="639.9">312</text><text x="1468" y="678.4">316</text><text x="1221" y="699.9">327</text><text x="1334" y="687.4">325</text><text x="1442" y="727.4">324</text><text x="1329" y="779.4">337</text><text x="5.5" y="795.4">741</text><text x="86.5" y="807.9">379</text><text x="730.5" y="795.4">3644</text><text x="787" y="812.4">3636</text><text x="618" y="886.9">373</text><text x="1096" y="805.9">3599</text><text x="1132.5" y="802.4">3593</text><text x="1190" y="818.9">3591</text><text x="902" y="881.9">362</text><text x="808" y="899.4">375</text><text x="1057.5" y="879.4">3600</text><text x="1111" y="907.4">3594</text><text x="1150" y="915.9">3588</text><text x="1302.5" y="859.4">3569</text><text x="1573" y="853.4">3535</text><text x="1506" y="1035.4">3536</text><text x="1563" y="1049.4">3530</text></g>
<g font-family="Liberation Mono" text-anchor="middle" fill="#8a7e62" fill-opacity="0.7" font-weight="bold" stroke="#f7edd5" stroke-width="3" stroke-opacity="0.5" paint-order="stroke" filter="url(#b2)"><text x="745" y="80" transform="rotate(-73 745 80)" font-size="40" letter-spacing="0" dy="14.4">JAMES</text><text x="946" y="30" transform="rotate(-73 946 30)" font-size="40" letter-spacing="0" dy="14.4">CO</text><text x="1299" y="42" transform="rotate(-72 1299 42)" font-size="40" letter-spacing="0" dy="14.4">CUR</text><text x="367" y="373" transform="rotate(17 367 373)" font-size="42" letter-spacing="0" dy="15.1">ALEXAN</text><text x="472" y="315" transform="rotate(-70 472 315)" font-size="42" letter-spacing="0" dy="15.1">DER ST</text><text x="610" y="432" transform="rotate(-68 610 432)" font-size="40" letter-spacing="0" dy="14.4">JAMES ST</text><text x="946" y="306" transform="rotate(21 946 306)" font-size="40" letter-spacing="0" dy="14.4">RIPLEY</text><text x="1028" y="373" transform="rotate(70 1028 373)" font-size="40" letter-spacing="0" dy="14.4">ST</text><text x="1141" y="502" transform="rotate(-70 1141 502)" font-size="40" letter-spacing="0" dy="14.4">CORRAN ST</text><text x="1327" y="552" transform="rotate(-70 1327 552)" font-size="40" letter-spacing="0" dy="14.4">OLIVE ST</text><text x="1392" y="728" transform="rotate(-68 1392 728)" font-size="40" letter-spacing="0" dy="14.4">IRISH BROOK RD</text><text x="1570" y="547" transform="rotate(20 1570 547)" font-size="40" letter-spacing="0" dy="14.4">BRO</text><text x="38" y="845" transform="rotate(5 38 845)" font-size="40" letter-spacing="0" dy="14.4">AVE</text><text x="676" y="846" transform="rotate(-70 676 846)" font-size="40" letter-spacing="0" dy="14.4">CONVENT ST</text></g>
<g font-family="Liberation Sans" text-anchor="middle" fill="#9a8a66" fill-opacity="0.7" filter="url(#b2)"><text x="1552" y="757" transform="rotate(-25 1552 757)" font-size="40" letter-spacing="2" dy="14.4">Irish</text></g>
<g filter="url(#b15)"><path d="M95,417 L165,418 L165,447 Q163,482 130,482 Q97,482 95,447 Z" fill="#f9efd8" fill-opacity="0.75" stroke="#9a8a66" stroke-opacity="0.5" stroke-width="2.4"/><text x="129" y="458" text-anchor="middle" font-family="Liberation Sans" font-size="37" fill="#86785a" fill-opacity="0.8" letter-spacing="-3" transform="translate(129 458) scale(0.9 0.78) translate(-129 -458)">28</text></g>
<rect x="0" y="3" width="186" height="217" fill="#fffaf0" fill-opacity="0.42"/>
<g fill="none" stroke="#b9a680" stroke-opacity="0.6" stroke-width="1"><polyline points="40,0 125,112 186,190"/><polyline points="0,95 145,0"/><polyline points="0,125 190,0"/><polyline points="20,175 186,62"/><polyline points="60,200 186,118"/><polyline points="0,20 40,65 0,110"/></g>
<path fill-rule="evenodd" fill="#85795f" fill-opacity="0.7" d="M9,9 H167 V173 H9 Z M31,27.5 V152 H75 V27.5 Z M94,27.5 V87.5 H106 A30,30 0 0 0 106,27.5 Z M94,89 V152 H154 Z"/>
<text x="8" y="209" font-family="Liberation Sans" font-size="34" fill="#85795f" fill-opacity="0.75" stroke="#85795f" stroke-opacity="0.75" stroke-width="0.9" letter-spacing="0.2">REALTOR</text>
<circle cx="175" cy="185" r="6.5" fill="none" stroke="#85795f" stroke-opacity="0.75" stroke-width="1.4"/>
<text x="175" y="188.5" text-anchor="middle" font-family="Liberation Sans" font-size="8" fill="#85795f">R</text>
<g font-family="Liberation Sans" font-size="9.6" text-anchor="middle" fill="#2e3546" stroke="#fffaf0" stroke-width="2" stroke-opacity="0.6" paint-order="stroke"><text x="128" y="34">286</text><text x="19" y="165.4">314</text><text x="78" y="214">3755</text></g>
<g fill="#a0937a" fill-opacity="0.85" font-family="Liberation Sans"><text x="1511" y="37.5" font-size="37" textLength="30" lengthAdjust="spacingAndGlyphs">ns</text><text x="1563.5" y="37.5" font-size="24" textLength="12" lengthAdjust="spacingAndGlyphs">a</text><text x="1578.5" y="37.5" font-size="27" textLength="14" lengthAdjust="spacingAndGlyphs">R</text></g>
<path d="M1541,24.5 L1552.5,13 L1562,22" fill="none" stroke="#a0937a" stroke-opacity="0.85" stroke-width="2.4"/>
<rect x="1551" y="24" width="3" height="3" fill="#a0937a" opacity="0.85"/>
<g fill="#a89c80" opacity="0.55"><rect x="1518" y="42.5" width="67" height="3"/><rect x="1535" y="47.5" width="32" height="3"/></g>
<rect x="0" y="0" width="1600" height="2" fill="#e4ded2"/>
<circle cx="800.5" cy="528" r="3.2" fill="#3a3a3a"/>
<circle cx="1582.5" cy="387" r="2.2" fill="#7a7a50" stroke="#cfc7a0" stroke-width="0.8"/>
<defs><linearGradient id="bg1" x1="0" y1="0" x2="0" y2="1"><stop offset="0" stop-color="#6a5020" stop-opacity="0.03"/><stop offset="1" stop-color="#6a5020" stop-opacity="0.14"/></linearGradient></defs><rect x="0" y="1017" width="1600" height="36" fill="url(#bg1)"/>
<path d="M1587.5,15.5 L1587.5,8.5 L1589.8,10.8 L1596.3,4.3 L1598.7,6.7 L1592.2,13.2 L1594.5,15.5 Z" fill="#f4f0fa" stroke="#333" stroke-width="0.9" stroke-linejoin="miter"/>
</svg>

<div id="toolbar">
  <div class="title">CBRM Land-Use Bylaw / Zoning Interactive Map</div>
  <div class="zbtn" style="left:9px"><svg width="25" height="25" viewBox="0 0 25 25"><circle cx="12.5" cy="12.5" r="12.5" fill="#fff"/><path d="M12.5 6.5v12M6.5 12.5h12" stroke="#3f6fd8" stroke-width="2.4"/></svg></div>
  <div class="zbtn" style="left:41.5px"><svg width="25" height="25" viewBox="0 0 25 25"><circle cx="12.5" cy="12.5" r="12.5" fill="#fff"/><path d="M6.5 12.5h12" stroke="#3f6fd8" stroke-width="2.4"/></svg></div>
  <div id="search">
    <svg style="position:absolute;left:10px;top:12px" width="14" height="8" viewBox="0 0 14 8"><path d="M0 0h14L7 8z" fill="#fff"/></svg>
    <span class="stext">324 Convent Street, New</span><svg style="position:absolute;left:200px;top:11px" width="15" height="14" viewBox="0 0 15 14"><path d="M1.5 1.5L13.5 12.5M13.5 1.5L1.5 12.5" stroke="#fff" stroke-width="1.3" fill="none"/><path d="M3.5 1.5L13.5 10.5" stroke="#fff" stroke-width="0.6" stroke-opacity="0.6"/></svg>
    <svg style="position:absolute;left:228px;top:8px" width="18" height="18" viewBox="0 0 18 18"><circle cx="7" cy="7" r="5.2" fill="none" stroke="#fff" stroke-width="2"/><path d="M10.8 10.8l5.5 5.5" stroke="#fff" stroke-width="2.6" stroke-linecap="round"/></svg>
  </div>
  <svg style="position:absolute;left:336px;top:62px" width="6" height="22" viewBox="0 0 6 22"><circle cx="3" cy="3" r="2.2" fill="#1d2d55"/><circle cx="3" cy="11" r="2.2" fill="#1d2d55"/><circle cx="3" cy="19" r="2.2" fill="#1d2d55"/></svg>
  <!-- list icon -->
  <svg class="ic" style="left:364px" width="26" height="26" viewBox="0 0 26 26"><path d="M2.5 1l2.6 4h-5.2z" fill="#fff"/><rect x="0.5" y="10.5" width="4.5" height="4.5" fill="#fff"/><circle cx="2.75" cy="22.5" r="2.4" fill="#fff"/><rect x="8" y="2" width="17" height="2.2" fill="#fff"/><rect x="8" y="11.7" width="17" height="2.2" fill="#fff"/><rect x="8" y="21.4" width="17" height="2.2" fill="#fff"/></svg>
  <!-- layers -->
  <svg class="ic" style="left:419px" width="26" height="26" viewBox="0 0 26 26"><path d="M13 1L25 8 13 15 1 8z" fill="#fff"/><path d="M3.2 11.5L13 17.2l9.8-5.7L25 12.8 13 19.8 1 12.8z" fill="#fff"/><path d="M3.2 16.5L13 22.2l9.8-5.7L25 17.8 13 24.8 1 17.8z" fill="#fff"/></svg>
  <!-- grid -->
  <svg class="ic" style="left:474px" width="26" height="26" viewBox="0 0 26 26"><rect x="0.5" y="0.5" width="11.2" height="11.2" fill="#fff"/><rect x="14" y="0.5" width="11.2" height="11.2" fill="#fff"/><rect x="0.5" y="14" width="11.2" height="11.2" fill="#fff"/><rect x="14" y="14" width="11.2" height="11.2" fill="#fff"/></svg>
  <!-- ruler -->
  <svg class="ic" style="left:529px" width="26" height="26" viewBox="0 0 26 26"><g transform="rotate(-45 13 13)"><rect x="-1" y="9" width="28" height="8" fill="#fff"/><path d="M3 9v3M7 9v4M11 9v3M15 9v4M19 9v3M23 9v4" stroke="#3f6fd8" stroke-width="1.2"/></g></svg>
  <!-- palette -->
  <svg class="ic" style="left:584px" width="26" height="26" viewBox="0 0 26 26"><path d="M15 2c6 0 10 4.5 10 10.5S21 24 15 24c-2 0-3-1-3-2.5s1.5-2 1.5-3.5S12 16 10.5 16 9 17 7.5 17 5 15 5 12.5C5 6.5 9 2 15 2z" fill="#fff"/><circle cx="15" cy="7" r="1.8" fill="#3f6fd8"/><circle cx="20.5" cy="10" r="1.8" fill="#3f6fd8"/><circle cx="21" cy="16" r="1.8" fill="#3f6fd8"/><circle cx="16.5" cy="20" r="1.8" fill="#3f6fd8"/><circle cx="10" cy="10.5" r="1.8" fill="#3f6fd8"/><rect x="4.5" y="1" width="2" height="24" rx="1" fill="#fff"/><path d="M3 9h5v6H3z" fill="#fff"/></svg>
  <!-- printer -->
  <svg class="ic" style="left:638px" width="27" height="26" viewBox="0 0 27 26"><rect x="6.5" y="1" width="14" height="7" fill="#fff"/><rect x="8.5" y="3" width="10" height="5" fill="#3f6fd8"/><rect x="0.5" y="8.5" width="26" height="12" rx="3" fill="#fff"/><rect x="6" y="16" width="15" height="9" fill="#fff" stroke="#3f6fd8" stroke-width="1.6"/><rect x="9" y="20" width="9" height="1.6" fill="#3f6fd8"/><circle cx="22.5" cy="12" r="1.2" fill="#3f6fd8"/></svg>
</div>
<div id="popup">
  <div class="ph"><span class="pt">(2 of 2)</span>
   <svg style="position:absolute;left:201px;top:6px" width="9" height="9" viewBox="0 0 9 9"><path d="M8.5 0v9L0 4.5z" fill="#fff"/></svg>
   <svg style="position:absolute;left:241px;top:5px" width="12" height="10" viewBox="0 0 12 10"><rect x="0.9" y="0.9" width="10.2" height="8.2" fill="none" stroke="#fff" stroke-width="1.8"/><rect x="0" y="0" width="12" height="2.6" fill="#fff"/></svg>
   <svg style="position:absolute;left:260px;top:5px" width="10" height="10" viewBox="0 0 10 10"><path d="M1 1l8 8M9 1L1 9" stroke="#fff" stroke-width="2"/></svg>
  </div>
  <div class="pb">
   <div class="zone">Zone: Low Density Urban Residential</div>
   <div class="hr"></div>
   <div class="row" style="top:40px"><span class="lab">Name:</span><span class="val">UR2</span></div>
   <div class="row" style="top:54px"><span class="lab">Description:</span><span class="val">Low Density Urban Residential</span></div>
   <div class="row" style="top:83px">A copy of CBRM's Land-use Bylaw can be</div>
   <div class="row" style="top:97px">found <u class="lk">here</u></div>
   <div class="row" style="top:125px">If you have questions, you can email to</div>
   <div class="row" style="top:140px"><u class="lk">planningconsult@cbrm.ns.ca</u></div>
   <div class="row" style="top:176px"><u class="lk">Zoom to</u></div>
   <svg style="position:absolute;left:238px;top:180px" width="18" height="6" viewBox="0 0 18 6"><circle cx="3" cy="3" r="2.3" fill="#555"/><circle cx="9" cy="3" r="2.3" fill="#555"/><circle cx="15" cy="3" r="2.3" fill="#555"/></svg>
  </div>
  <svg style="position:absolute;left:-11px;top:97px" width="12" height="22" viewBox="0 0 12 22"><path d="M12 0L1 11l11 11z" fill="#fff"/></svg>
</div>

</body></html>
